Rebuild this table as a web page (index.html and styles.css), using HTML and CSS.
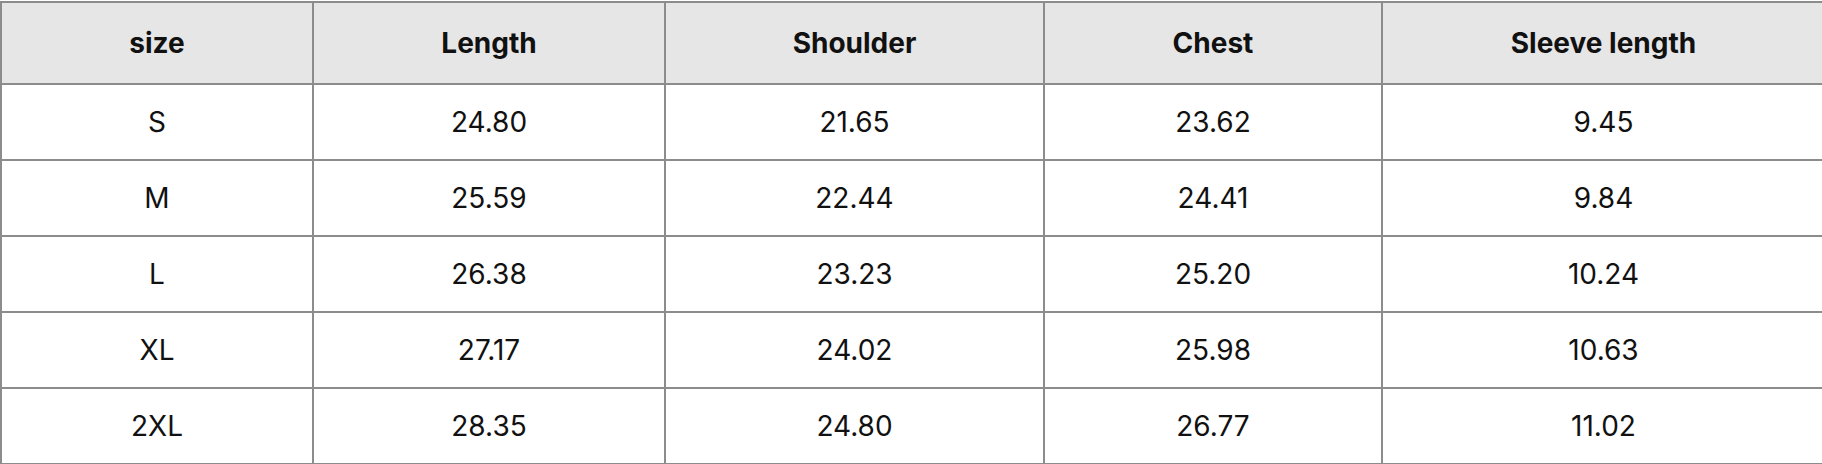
FILE: index.html
```html
<!DOCTYPE html>
<html>
<head>
<meta charset="utf-8">
<link rel="stylesheet" href="styles.css">
</head>
<body>
<div class="wrap">
  <div class="grid">
    <div class="cell head">size</div>
    <div class="cell head">Length</div>
    <div class="cell head">Shoulder</div>
    <div class="cell head">Chest</div>
    <div class="cell head">Sleeve length</div>

    <div class="cell">S</div>
    <div class="cell">24.80</div>
    <div class="cell">21.65</div>
    <div class="cell">23.62</div>
    <div class="cell">9.45</div>

    <div class="cell">M</div>
    <div class="cell">25.59</div>
    <div class="cell">22.44</div>
    <div class="cell">24.41</div>
    <div class="cell">9.84</div>

    <div class="cell">L</div>
    <div class="cell">26.38</div>
    <div class="cell">23.23</div>
    <div class="cell">25.20</div>
    <div class="cell">10.24</div>

    <div class="cell">XL</div>
    <div class="cell">27.17</div>
    <div class="cell">24.02</div>
    <div class="cell">25.98</div>
    <div class="cell">10.63</div>

    <div class="cell">2XL</div>
    <div class="cell">28.35</div>
    <div class="cell">24.80</div>
    <div class="cell">26.77</div>
    <div class="cell">11.02</div>
  </div>
</div>
</body>
</html>
```
FILE: styles.css
```css
html, body {
  margin: 0;
  padding: 0;
  background: #ffffff;
}
body {
  width: 1822px;
  height: 464px;
  overflow: hidden;
  font-family: Inter, "Liberation Sans", sans-serif;
  color: #111111;
}
.wrap {
  padding-top: 1px;
}
.grid {
  display: grid;
  grid-template-columns: 310px 350px 377px 336px 441px;
  grid-template-rows: 80px repeat(5, 74px);
  gap: 2px;
  padding: 2px;
  background: #8c8c8c;
  width: max-content;
}
.cell {
  background: #ffffff;
  display: flex;
  align-items: center;
  justify-content: center;
  font-size: 28px;
  font-weight: 400;
}
.head {
  background: #e6e6e6;
  font-weight: 700;
}
```
